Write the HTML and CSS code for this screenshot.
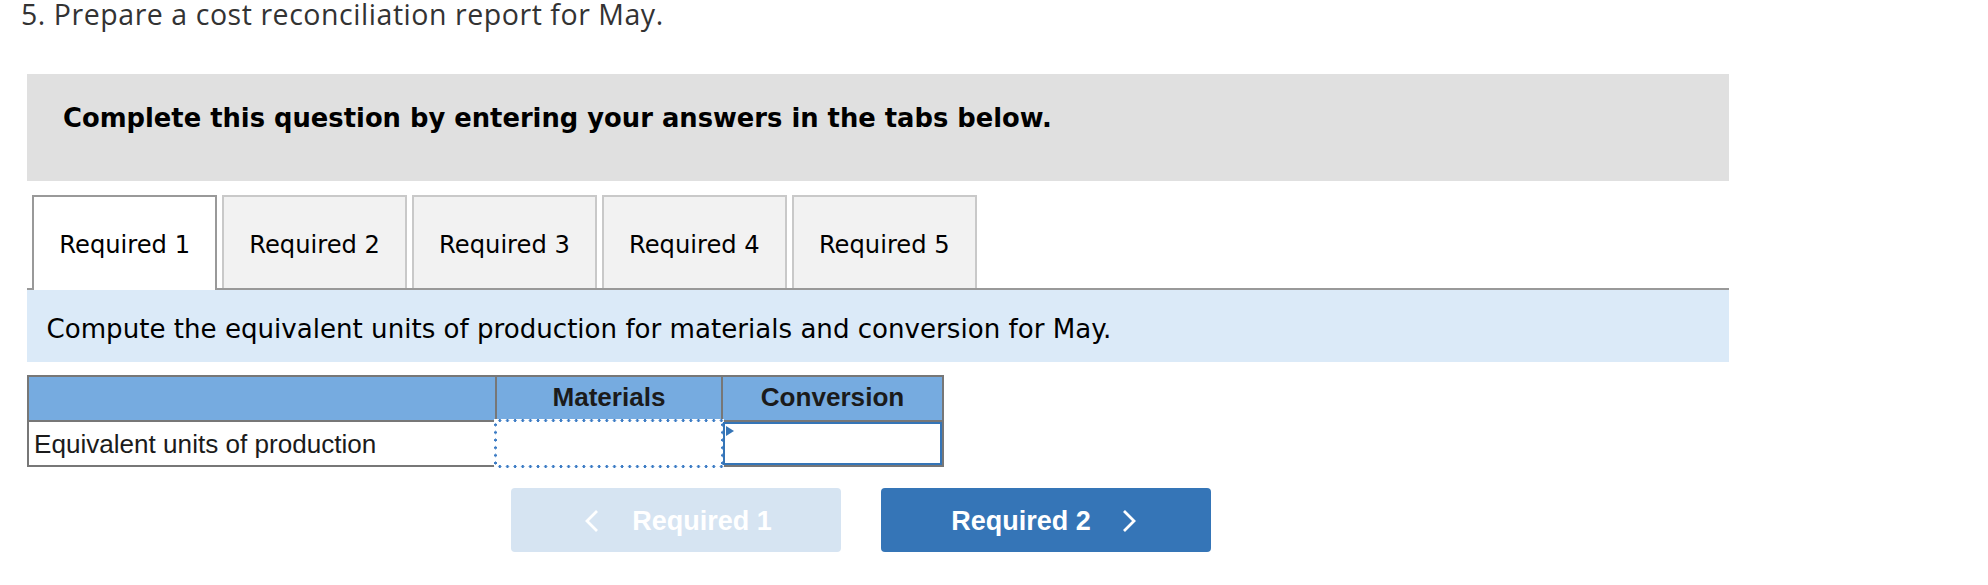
FILE: index.html
```html
<!DOCTYPE html>
<html lang="en">
<head>
<meta charset="utf-8">
<title>Cost reconciliation</title>
<link rel="stylesheet" href="styles.css">
</head>
<body>
<h1 class="title">5. Prepare a cost reconciliation report for May.</h1>
<section class="panel">
  <div class="instructions">Complete this question by entering your answers in the tabs below.</div>
  <div class="tabs">
    <button class="tab active">Required 1</button>
    <button class="tab">Required 2</button>
    <button class="tab">Required 3</button>
    <button class="tab">Required 4</button>
    <button class="tab">Required 5</button>
  </div>
  <div class="prompt">Compute the equivalent units of production for materials and conversion for May.</div>
  <table class="grid">
    <colgroup><col class="c1"><col class="c2"><col class="c3"></colgroup>
    <thead>
      <tr><th></th><th>Materials</th><th>Conversion</th></tr>
    </thead>
    <tbody>
      <tr>
        <td class="label">Equivalent units of production</td>
        <td class="cell focus"></td>
        <td class="cell entry"><span class="caret"></span><input class="field" type="text" aria-label="Conversion"></td>
      </tr>
    </tbody>
  </table>
  <div class="nav">
    <button class="navbtn prev"><svg class="chev" viewBox="0 0 16 24" width="16" height="24"><polyline points="13,2 3,12 13,22" fill="none" stroke="#fff" stroke-width="2.8"/></svg><span class="navtext">Required 1</span></button>
    <button class="navbtn next"><span class="navtext">Required 2</span><svg class="chev" viewBox="0 0 16 24" width="16" height="24"><polyline points="3,2 13,12 3,22" fill="none" stroke="#fff" stroke-width="2.8"/></svg></button>
  </div>
</section>
</body>
</html>
```
FILE: styles.css
```css
html, body {
  margin: 0;
  padding: 0;
  background: #fff;
}

body {
  font-family: "DejaVu Sans", Verdana, sans-serif;
  color: #000;
}

.title {
  margin: 0;
  padding-left: 21px;
  font-family: "Open Sans", Lato, sans-serif;
  font-weight: 400;
  font-size: 28.5px;
  line-height: 28px;
  letter-spacing: 0.55px;
  color: #333;
}

.panel {
  margin: 46px 0 0 27px;
  width: 1702px;
}

.instructions {
  height: 107px;
  box-sizing: border-box;
  padding: 29px 0 0 36px;
  background: #e0e0e0;
  font-weight: 700;
  font-size: 25.8px;
  line-height: 30px;
}

.tabs {
  margin-top: 14px;
  display: flex;
  align-items: flex-start;
  gap: 4.5px;
  padding-left: 5px;
  border-bottom: 2px solid #999;
  height: 93px;
}

.tab {
  box-sizing: border-box;
  width: 185.4px;
  height: 93px;
  padding: 4px 0 0;
  border: 2px solid #c9c9c9;
  border-bottom: 0;
  background: #f2f2f2;
  font-family: "DejaVu Sans", Verdana, sans-serif;
  font-size: 24.2px;
  line-height: 28px;
  color: #000;
  text-align: center;
}

.tab.active {
  height: 95px;
  padding: 4px 0 2px;
  margin-bottom: -2px;
  background: #fff;
  border-color: #999;
  position: relative;
}

.prompt {
  height: 72px;
  box-sizing: border-box;
  padding: 23.5px 0 0 19.5px;
  background: #dbeaf8;
  font-size: 26.1px;
  line-height: 30px;
}

.grid {
  margin-top: 13px;
  border-collapse: collapse;
  table-layout: fixed;
  width: 917px;
  font-family: "Liberation Sans", Arial, sans-serif;
  font-size: 26.1px;
}

.grid .c1 { width: 468px; }
.grid .c2 { width: 226px; }
.grid .c3 { width: 221px; }

.grid th,
.grid td {
  border: 2px solid #777;
  height: 43px;
  padding: 0;
  line-height: 30px;
}

.grid th {
  background: #76abe0;
  color: #1b1b1b;
  font-weight: 700;
  text-align: center;
  padding-bottom: 4px;
  height: 39px;
}

.grid td.label {
  padding-left: 5px;
  color: #1b1b1b;
  text-align: left;
}

.grid td.cell {
  position: relative;
}

.grid td.focus::after {
  content: "";
  position: absolute;
  left: -3px;
  top: -3px;
  right: -3px;
  bottom: -3px;
  background:
    radial-gradient(circle, #3b7bc4 1.3px, transparent 1.7px) 2px 0 / 7.65px 3px repeat-x,
    radial-gradient(circle, #3b7bc4 1.3px, transparent 1.7px) 2px 100% / 7.65px 3px repeat-x,
    radial-gradient(circle, #3b7bc4 1.3px, transparent 1.7px) 0 2px / 3px 7.65px repeat-y,
    radial-gradient(circle, #3b7bc4 1.3px, transparent 1.7px) 100% 2px / 3px 7.65px repeat-y,
    #fff;
}

.field {
  display: block;
  box-sizing: border-box;
  width: 100%;
  height: 43px;
  margin: 0;
  border: 2px solid #3575b7;
  padding: 0 6px;
  background: #fff;
  font: inherit;
  outline: none;
}

.caret {
  position: absolute;
  left: 3px;
  top: 4px;
  width: 0;
  height: 0;
  border-left: 8px solid #3575b7;
  border-top: 5.5px solid transparent;
  border-bottom: 5.5px solid transparent;
}

.nav {
  display: flex;
  gap: 40px;
  margin: 21px 0 0 484px;
}

.navbtn {
  box-sizing: border-box;
  width: 330px;
  height: 64px;
  border: 0;
  border-radius: 4px;
  display: flex;
  align-items: center;
  justify-content: center;
  font-family: "Liberation Sans", Arial, sans-serif;
  font-weight: 700;
  font-size: 27px;
  color: #fff;
  padding: 2px 0 0;
}

.navbtn.prev {
  background: #d6e4f2;
  gap: 32px;
  padding-left: 4px;
}

.navbtn.next {
  background: #3575b7;
  gap: 30px;
  padding-right: 4px;
}

.chev {
  display: block;
}
```
